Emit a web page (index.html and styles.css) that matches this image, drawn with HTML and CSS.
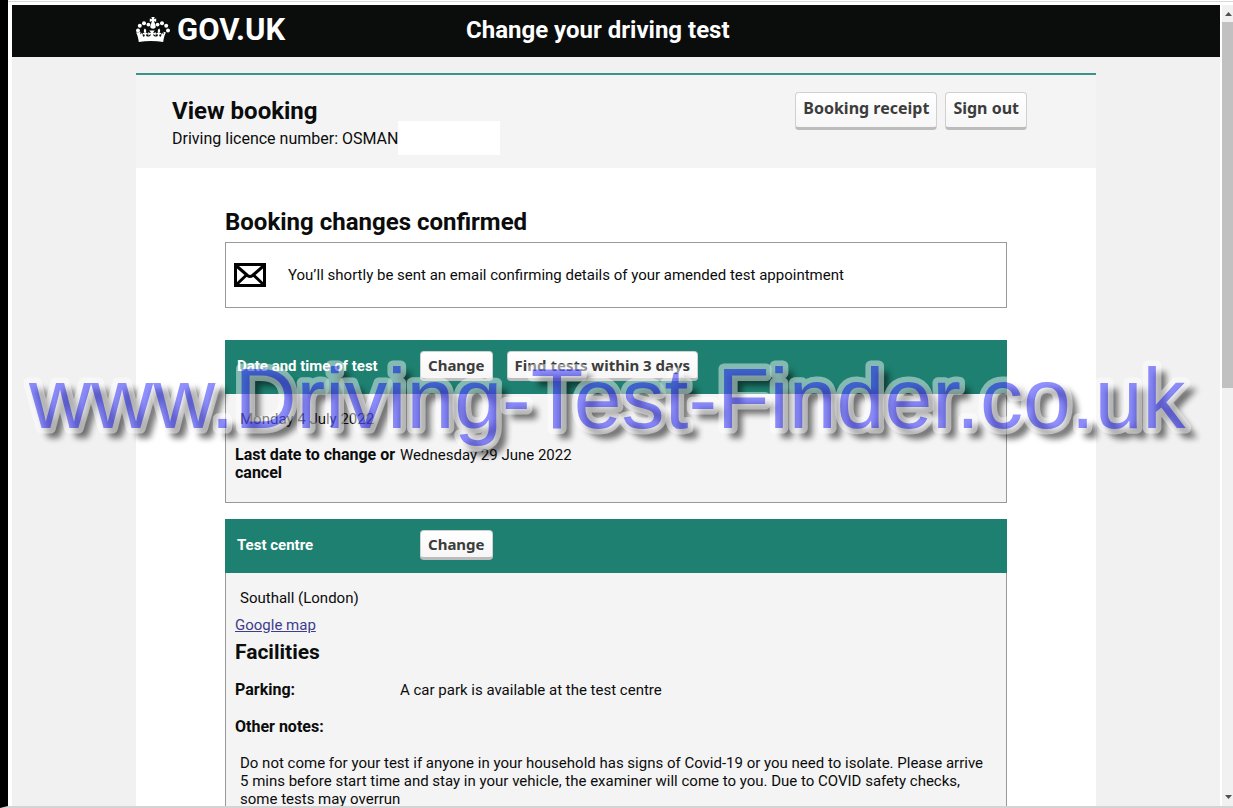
FILE: index.html
```html
<!DOCTYPE html>
<html lang="en">
<head>
<meta charset="utf-8">
<meta name="viewport" content="width=device-width, initial-scale=1">
<title>Change your driving test</title>
<link rel="stylesheet" href="styles.css">
</head>
<body>
<div class="window">
  <div class="page">
    <header class="topbar">
      <div class="topbar-inner">
        <a class="logo" href="#">
          <svg class="crown" viewBox="0 0 34 26" aria-hidden="true">
            <g fill="#fff">
              <circle cx="2" cy="13.500" r="2"/><circle cx="3.800" cy="8.800" r="2"/><circle cx="8" cy="6.300" r="2"/><circle cx="12.400" cy="7.600" r="1.900"/>
              <circle cx="32" cy="13.500" r="2"/><circle cx="30.200" cy="8.800" r="2"/><circle cx="26" cy="6.300" r="2"/><circle cx="21.600" cy="7.600" r="1.900"/>
              <path d="M15.300 0h3.400l-.8 2.300 2.300-.7v3.400l-2.200-1 1.700 5c.4 1.500-.8 2.700-2.700 2.700s-3.100-1.200-2.700-2.700l1.700-5-2.200 1v-3.400l2.300.7z"/>
              <path d="M2 15.500l2.500-.7c-.3 1.200-.2 2 .1 2.800.5-.5.800-1.200 1.100-2.200l1.500 4.400c1.600-.1 2-1.500 1.100-2.400-.7-.6-1.400.2-1.600.6-.5-1.800.7-2.600 2-2-1.300-1.700-1.200-3.200.2-4.600 1.600 1.400 1.700 2.900.7 4.700 1.200-.9 2.600-.1 2.200 1.700-.8-1-1.800-.4-1.700.7.200 1.500 4.700 1.600 4.900-1.300-.9-.1-1.700.4-2.600 1.500l-.4-3.800c.8.800 1.700 1.100 2.800 1.100-.2-1-.8-1.800-1.500-2.500h5.400c-.7.700-1.300 1.500-1.500 2.500 1.100 0 2-.3 2.800-1.100l-.4 3.800c-.9-1.100-1.700-1.600-2.600-1.500.2 2.900 4.700 2.800 4.900 1.300.1-1.100-.9-1.700-1.700-.7-.4-1.800 1-2.600 2.200-1.700-1-1.800-.9-3.300.7-4.700 1.400 1.400 1.500 2.900.2 4.600 1.300-.6 2.500.2 2 2-.2-.4-.9-1.200-1.600-.6-.9.900-.5 2.300 1.100 2.400l1.500-4.400c.3 1 .6 1.700 1.100 2.200.3-.8.400-1.600.1-2.800l2.500.7c-1.400 2.300-2.200 5-2.800 9.500-8-1.300-16.400-1.300-24.400 0-.6-4.500-1.400-7.200-2.800-9.500z"/>
            </g>
          </svg>
          <span>GOV.UK</span>
        </a>
        <span class="service">Change your driving test</span>
      </div>
    </header>

    <main class="content">
      <div class="booking-bar">
        <div>
          <h1 class="booking-title">View booking</h1>
          <p class="licence">Driving licence number: OSMAN<span class="redaction"></span></p>
        </div>
        <div class="actions">
          <button class="btn btn-large" type="button">Booking receipt</button>
          <button class="btn btn-large" type="button">Sign out</button>
        </div>
      </div>

      <div class="details">
        <h2 class="heading">Booking changes confirmed</h2>
        <div class="notice">
          <svg class="envelope" viewBox="0 0 32 24" aria-hidden="true">
            <path d="M1.500 1.500h29v21h-29zM2 2.500l11.500 10q2.500 2 5 0L30 2.500M2 22l10.500-10M30 22L19.500 12" fill="none" stroke="#000" stroke-width="3"/>
          </svg>
          <p>You’ll shortly be sent an email confirming details of your amended test appointment</p>
        </div>

        <section class="card">
          <div class="card-head">
            <h3 class="card-title">Date and time of test</h3>
            <button class="btn" type="button">Change</button>
            <button class="btn" type="button">Find tests within 3 days</button>
          </div>
          <div class="card-body">
            <p class="value">Monday 4 July 2022</p>
            <dl class="facts">
              <dt>Last date to change or cancel</dt>
              <dd>Wednesday 29 June 2022</dd>
            </dl>
          </div>
        </section>

        <section class="card">
          <div class="card-head">
            <h3 class="card-title">Test centre</h3>
            <button class="btn" type="button">Change</button>
          </div>
          <div class="card-body">
            <p class="value">Southall (London)</p>
            <a class="map" href="#">Google map</a>
            <h4 class="subheading">Facilities</h4>
            <dl class="facts">
              <dt>Parking:</dt>
              <dd>A car park is available at the test centre</dd>
              <dt>Other notes:</dt>
            </dl>
            <p class="value notes">Do not come for your test if anyone in your household has signs of Covid-19 or you need to isolate. Please arrive 5 mins before start time and stay in your vehicle, the examiner will come to you. Due to COVID safety checks, some tests may overrun</p>
          </div>
        </section>
      </div>
    </main>
  </div>
  <div class="scrollbar" aria-hidden="true">
    <svg class="arrow" viewBox="0 0 7 4"><path d="M0 4L3.500 0 7 4z" fill="#505050"/></svg>
    <div class="thumb"></div>
    <svg class="arrow arrow-down" viewBox="0 0 7 4"><path d="M0 0h7L3.500 4z" fill="#505050"/></svg>
  </div>
  <svg class="watermark" viewBox="0 0 1180 110">
    <defs>
      <filter id="soft" x="-5%" y="-30%" width="110%" height="160%"><feGaussianBlur stdDeviation="3"/></filter>
    </defs>
    <use class="mark-shadow" href="#mark" x="8" y="8" filter="url(#soft)"/>
    <g class="mark-front"><text id="mark" x="0" y="72">www.Driving-Test-Finder.co.uk</text></g>
  </svg>
</div>
</body>
</html>
```
FILE: styles.css
```css
* { box-sizing: border-box; }

body {
  margin: 0;
  background: #fff;
  color: #0b0c0c;
  font: 15px/18px Roboto, sans-serif;
}

h1, h2, h3, h4, p, dl, dd { margin: 0; }

.window {
  position: relative;
  display: flex;
  height: 100vh;
  overflow: hidden;
  padding-top: 5px;
  border-left: 8px solid #000;
  border-bottom: 2px solid #d4d4d4;
  background: linear-gradient(#fff 1px, #d8d8d8 1px, #d8d8d8 2px, #fff 2px);
}

.page {
  flex: 1;
  min-width: 0;
  margin: 0 2px 0 4px;
  overflow: hidden;
  background: #f1f1f1;
}

.topbar { background: #0b0c0c; color: #fff; }

.topbar-inner {
  display: grid;
  grid-template-columns: 330px 1fr;
  align-items: center;
  max-width: 960px;
  height: 52px;
  margin: 0 auto;
  padding-bottom: 2px;
}

.logo {
  display: flex;
  align-items: center;
  gap: 7px;
  color: #fff;
  font-size: 31px;
  font-weight: 700;
  line-height: 32px;
  text-decoration: none;
}

.crown { width: 34px; height: 26px; }

.service { font-size: 24px; font-weight: 700; line-height: 32px; }

.content {
  max-width: 960px;
  margin: 16px auto 0;
  border-top: 2px solid #3a938b;
  background: #fff;
}

.booking-bar {
  display: flex;
  justify-content: space-between;
  min-height: 93px;
  padding: 17px 69px 0 36px;
  background: #f4f4f4;
}

.booking-title, .heading { font-size: 24px; font-weight: 700; line-height: 36px; }

.booking-title { padding-top: 1px; }

.licence { display: flex; font-size: 16px; line-height: 20px; }

.redaction {
  width: 102px;
  height: 34px;
  margin: -8px 0;
  background: #fff;
}

.actions { display: flex; align-items: flex-start; gap: 8px; }

.btn {
  height: 30px;
  padding: 0 7px 1px;
  border: 1px solid #d0d0d0;
  border-bottom: 3px solid #bcbcbc;
  border-radius: 4px;
  background: linear-gradient(#fff, #f6f6f6);
  color: #3c3c3c;
  font: 700 15px/20px "Noto Sans", sans-serif;
}

.btn-large { height: 38px; padding-bottom: 4px; font-size: 16px; }

.details { padding: 36px 89px; }

.notice {
  display: flex;
  align-items: center;
  gap: 22px;
  min-height: 66px;
  margin: 2px 0 32px;
  padding: 0 8px;
  border: 1px solid #999;
}

.envelope { width: 32px; height: 24px; }

.card { margin-bottom: 16px; }

.card-head {
  display: flex;
  align-items: center;
  gap: 14px;
  min-height: 54px;
  padding: 0 12px 2px;
  background: #1d8070;
  color: #fff;
}

.card-title { width: 169px; font-size: 15px; font-weight: 700; }

.card-body {
  padding: 16px 9px 20px;
  border: 1px solid #999;
  border-top: 0;
  background: #f4f4f4;
}

.value { padding-left: 5px; }

.map {
  display: block;
  width: max-content;
  margin-top: 9px;
  color: #3e3c8c;
}

.subheading { margin: 6px 0 -1px; font-size: 21px; line-height: 24px; }

.facts {
  display: grid;
  grid-template-columns: 165px 1fr;
  row-gap: 19px;
  margin-top: 18px;
}

.facts dt { font-size: 16px; font-weight: 700; }

.notes { margin-top: 18px; padding-right: 8px; }

.scrollbar {
  display: flex;
  flex-direction: column;
  align-items: center;
  width: 11px;
  padding: 7px 0;
  background: #f1f1f1;
}

.arrow { width: 7px; height: 4px; margin-left: 2px; }

.thumb { width: 100%; height: 366px; margin-top: 6px; background: #c1c1c1; }

.arrow-down { margin-top: auto; }

.watermark {
  position: absolute;
  top: 356px;
  left: 21px;
  width: 1180px;
  height: 110px;
  overflow: visible;
  font: 86px "Liberation Sans", Arial, sans-serif;
  pointer-events: none;
}

.mark-shadow { fill: #000; stroke: #000; stroke-width: 4px; opacity: .55; }

.mark-front {
  fill: #5252ff;
  stroke: rgba(255, 255, 255, .72);
  stroke-width: 11px;
  stroke-linejoin: round;
  paint-order: stroke fill;
  opacity: .64;
}
```
